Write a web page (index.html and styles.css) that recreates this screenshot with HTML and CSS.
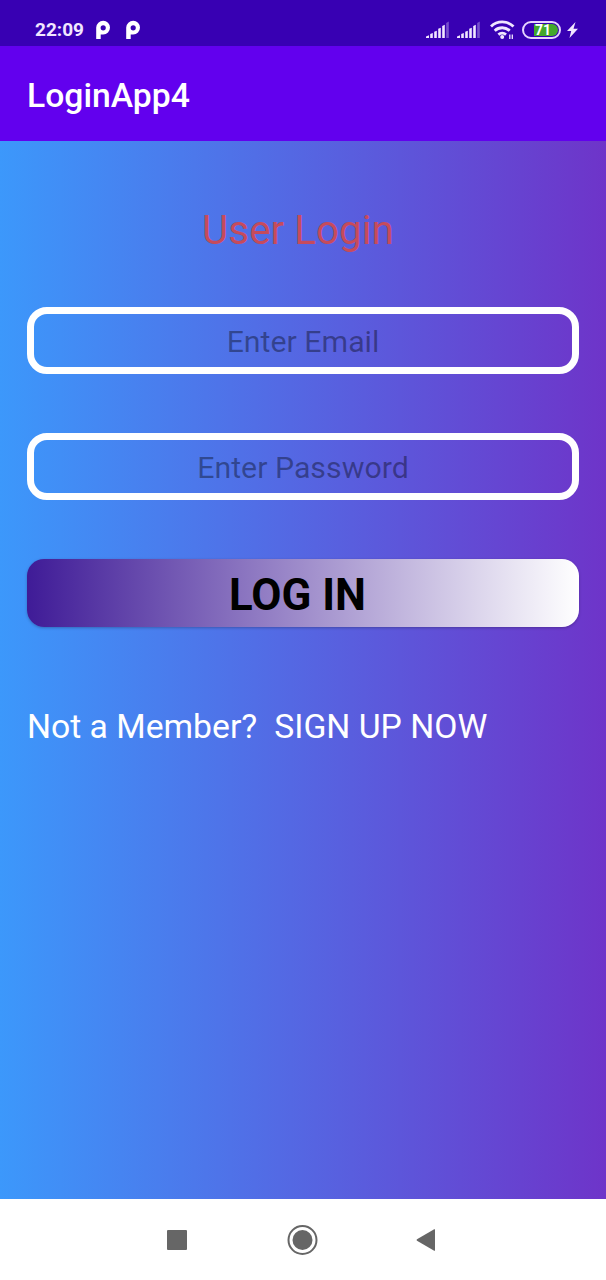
FILE: index.html
```html
<!DOCTYPE html>
<html lang="en">
<head>
<meta charset="utf-8">
<title>LoginApp4</title>
<link rel="stylesheet" href="styles.css">
</head>
<body>
<div class="status-bar">
  <span class="clock">22:09</span>
  <svg class="notification" viewBox="0 0 16 20"><path fill-rule="evenodd" d="M1.200 19V7.500A7 7 0 0 1 8.200.8a6.800 6.800 0 0 1 0 13.600H5.700V19zM8.200 5.200a2.600 2.600 0 1 0 0 5.200 2.600 2.600 0 0 0 0-5.200z"/></svg>
  <svg class="notification" viewBox="0 0 16 20"><path fill-rule="evenodd" d="M1.200 19V7.500A7 7 0 0 1 8.200.8a6.800 6.800 0 0 1 0 13.600H5.700V19zM8.200 5.200a2.600 2.600 0 1 0 0 5.200 2.600 2.600 0 0 0 0-5.200z"/></svg>
  <div class="indicators">
    <svg class="signal" viewBox="0 0 24 18"><path d="M0 17v-1.500l3-1.300V17zM4.200 17v-4l2.600-1V17zM8.200 17v-6.300l2.600-1V17zM12.200 17V7.800l2.600-1V17zM16.200 17V5l2.600-1.200V17z"/><path opacity=".35" d="M20.200 17V2l2.600-1.500V17z"/></svg>
    <svg class="signal" viewBox="0 0 24 18"><path d="M0 17v-1.500l3-1.300V17zM4.200 17v-4l2.600-1V17zM8.200 17v-6.300l2.600-1V17zM12.200 17V7.800l2.600-1V17zM16.200 17V5l2.600-1.200V17z"/><path opacity=".35" d="M20.200 17V2l2.600-1.500V17z"/></svg>
    <svg class="wifi" viewBox="0 0 26 20"><path d="M1 6.500a16 16 0 0 1 22.500 0M4.700 10.700a11 11 0 0 1 15 0M8.400 14.600a5.800 5.800 0 0 1 7.600 0"/><circle cx="12.200" cy="17" r="2"/><path class="traffic" d="M19.800 19v-4.500M22.300 14.500V19"/></svg>
    <div class="battery"><span class="battery-level">71</span></div>
    <svg class="bolt" viewBox="0 0 11 16"><path d="M8.500 0L0 9h4.200L2.500 16 11 6.700H6.500z"/></svg>
  </div>
</div>
<header class="app-bar">LoginApp4</header>
<main class="screen">
  <h1 class="title">User Login</h1>
  <input class="field" type="text" placeholder="Enter Email">
  <input class="field" type="password" placeholder="Enter Password">
  <button class="login">LOG IN</button>
  <div class="signup"><span>Not a Member?</span><span>SIGN UP NOW</span></div>
</main>
<nav class="nav-bar">
  <svg viewBox="0 0 32 32"><rect x="6" y="6" width="20" height="20" rx="1"/></svg>
  <svg viewBox="0 0 32 32"><circle cx="16.500" cy="16" r="10"/><circle class="ring" cx="16.500" cy="16" r="14"/></svg>
  <svg viewBox="0 0 32 32"><path d="M25 5.500v20.800q0 .8-.8.400L7 16.800q-1-.8 0-1.500L24.200 5.200q.8-.3.800.3z"/></svg>
</nav>
</body>
</html>
```
FILE: styles.css
```css
* { box-sizing: border-box; }
body {
  margin: 0;
  width: 606px;
  height: 1280px;
  display: flex;
  flex-direction: column;
  overflow: hidden;
  font-family: Roboto, sans-serif;
  background: #fff;
}
.status-bar {
  height: 46px;
  padding: 13px 28px 0 35px;
  display: flex;
  align-items: center;
  background: #3800b3;
  color: #f1e6ff;
}
.clock { width: 60px; font-size: 19px; font-weight: 700; line-height: 33px; }
.notification { width: 16px; height: 20px; margin-right: 14px; fill: #fff; }
.indicators { margin-left: auto; display: flex; align-items: center; }
.signal { width: 24px; height: 18px; margin-right: 7px; fill: #f1e6ff; }
.wifi { width: 26px; height: 20px; margin: 0 6px 0 2px; fill: #f1e6ff; }
.wifi path { fill: none; stroke: #f1e6ff; stroke-width: 2.800; }
.wifi .traffic { stroke-width: 1.300; }
.battery {
  width: 39px;
  height: 18px;
  padding: 1px;
  border: 2px solid #e6d4ff;
  border-radius: 9px;
  display: flex;
  justify-content: flex-end;
}
.battery-level {
  width: 24px;
  height: 12px;
  padding-left: 1px;
  border-radius: 0 6px 6px 0;
  background: #43a72c;
  color: #fff;
  font-size: 14px;
  font-weight: 700;
  line-height: 12px;
}
.bolt { width: 11px; height: 16px; margin-left: 6px; fill: #f1e6ff; }
.app-bar {
  height: 95px;
  padding-left: 27px;
  background: #6200ee;
  color: #fff;
  font-size: 33.700px;
  font-weight: 500;
  line-height: 99px;
}
.screen {
  height: 1058px;
  padding: 60px 27px 0;
  display: flex;
  flex-direction: column;
  background: linear-gradient(90deg, #3c98fb, #6e34c9);
}
.title {
  margin: 0 10px 46px 0;
  color: #c64b5c;
  font-size: 40.400px;
  font-weight: 400;
  line-height: 60px;
  text-align: center;
}
.field {
  height: 67px;
  margin: 0 0 59px;
  padding: 1px 0 0;
  border: 7px solid #fff;
  border-radius: 20px;
  background: transparent;
  font: 400 30.300px Roboto, sans-serif;
  text-align: center;
}
.field::placeholder { color: rgba(0, 0, 0, .38); opacity: 1; }
.login {
  height: 68px;
  padding: 3px 11px 0 0;
  border: 0;
  border-radius: 17px;
  background: linear-gradient(90deg, #3f1b97, #fff);
  box-shadow: 0 1px 3px rgba(0, 0, 0, .25);
  color: #000;
  font: 700 43.800px Roboto, sans-serif;
}
.signup {
  margin-top: 80px;
  display: flex;
  gap: 17px;
  color: #fff;
  font-size: 33.700px;
  line-height: 40px;
}
.nav-bar {
  height: 81px;
  padding: 0 164px 0 161px;
  display: flex;
  align-items: center;
  justify-content: space-between;
  background: #fff;
}
.nav-bar svg { width: 32px; height: 32px; fill: #666; }
.nav-bar .ring { fill: none; stroke: #666; stroke-width: 2; }
```
